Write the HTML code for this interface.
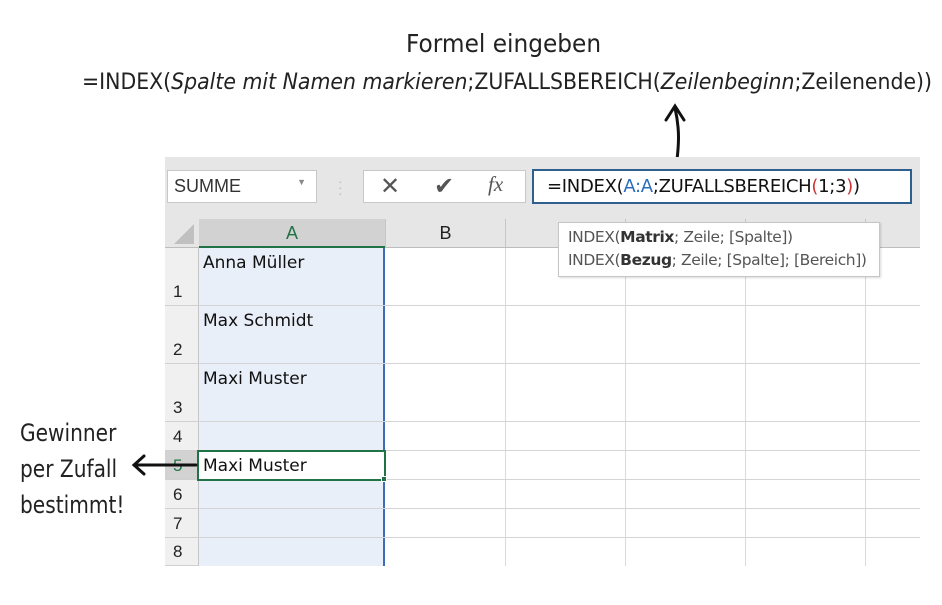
<!DOCTYPE html>
<html><head><meta charset="utf-8"><style>
*{margin:0;padding:0;box-sizing:border-box}
body{width:942px;height:605px;background:#fff;position:relative;overflow:hidden;font-family:"Liberation Sans","DejaVu Sans",sans-serif}
.a{position:absolute}
.hand{font-family:"DejaVu Sans",sans-serif;color:#222;white-space:nowrap;transform-origin:0 0}
.cell{position:absolute;font-family:"DejaVu Sans",sans-serif;font-size:17px;color:#111}
.rh{position:absolute;left:165px;width:34px;background:#f0f0f0;border-bottom:1px solid #d0d0d0;border-right:1px solid #c6c6c6;font-size:17px;color:#222;padding-left:8px;display:flex;align-items:flex-end;padding-bottom:3px}
</style></head><body>
<div class="a hand" style="left:406px;top:29px;font-size:25px;transform:scaleX(0.93)">Formel eingeben</div>
<div class="a hand" style="left:82px;top:70px;font-size:22px;transform:scaleX(0.93);font-weight:normal">=INDEX(<span style="font-style:oblique;font-weight:normal">Spalte mit Namen markieren</span>;ZUFALLSBEREICH(<span style="font-style:oblique">Zeilenbeginn</span>;Zeilenende))</div>
<svg class="a" style="left:660px;top:100px" width="30" height="70"><path d="M16 68 C19 45 20 30 15 8 M6 20 L15 6 L24 20" stroke="#111" stroke-width="3" fill="none" stroke-linecap="round"/></svg>

<div class="a" style="left:165px;top:157px;width:755px;height:62px;background:#e6e6e6"></div>
<div class="a" style="left:167px;top:170px;width:150px;height:33px;background:#fff;border:1px solid #c8c8c8;font-size:18px;color:#333;padding:5px 0 0 6px">SUMME<span style="position:absolute;right:10px;top:6px;font-size:9px;color:#888">▼</span></div>
<div class="a" style="left:338px;top:178px;color:#bbb;font-size:14px;line-height:6px">·<br>·<br>·</div>
<div class="a" style="left:363px;top:170px;width:163px;height:33px;background:#fff;border:1px solid #c8c8c8"></div>
<div class="a" style="left:380px;top:172px;font-size:24px;color:#555">✕</div>
<div class="a" style="left:434px;top:172px;font-size:24px;color:#555">✔</div>
<div class="a" style="left:488px;top:172px;font-size:21px;color:#555;font-family:'Liberation Serif',serif;font-style:italic">fx</div>
<div class="a" style="left:532px;top:169px;width:380px;height:35px;background:#fff;border:2px solid #2f5f8f;font-size:18px;color:#111;padding:5px 0 0 13px;font-family:'DejaVu Sans',sans-serif;letter-spacing:-0.3px">=INDEX(<span style="color:#2a6ebb">A:A</span>;ZUFALLSBEREICH<span style="color:#c33">(</span>1;3<span style="color:#c33">)</span>)</div>

<div class="a" style="left:165px;top:219px;width:755px;height:29px;background:#e6e6e6;border-bottom:1px solid #bdbdbd"></div>
<svg class="a" style="left:170px;top:222px" width="26" height="24"><path d="M24 2 L24 22 L4 22 Z" fill="#c0c0c0"/></svg>
<div class="a" style="left:199px;top:219px;width:186px;height:29px;background:#d2d2d2;border-bottom:2px solid #217346;color:#217346;font-size:18px;text-align:center;padding-top:4px">A</div>
<div class="a" style="left:385px;top:219px;width:120px;height:28px;border-left:1px solid #c6c6c6;font-size:18px;text-align:center;padding-top:4px;color:#222">B</div>
<div class="a" style="left:505px;top:219px;height:28px;border-left:1px solid #c6c6c6"></div>
<div class="a" style="left:625px;top:219px;height:28px;border-left:1px solid #c6c6c6"></div>
<div class="a" style="left:745px;top:219px;height:28px;border-left:1px solid #c6c6c6"></div>
<div class="a" style="left:865px;top:219px;height:28px;border-left:1px solid #c6c6c6"></div>

<div class="a" style="left:199px;top:248px;width:186px;height:318px;background:#e9eff9;border-right:2px solid #3f6cb8"></div>
<div class="a" style="left:505px;top:248px;height:318px;border-left:1px solid #dadada"></div>
<div class="a" style="left:625px;top:248px;height:318px;border-left:1px solid #dadada"></div>
<div class="a" style="left:745px;top:248px;height:318px;border-left:1px solid #dadada"></div>
<div class="a" style="left:865px;top:248px;height:318px;border-left:1px solid #dadada"></div>
<div class="a" style="left:199px;top:305px;width:721px;border-top:1px solid #d4d4d4"></div>
<div class="a" style="left:199px;top:363px;width:721px;border-top:1px solid #d4d4d4"></div>
<div class="a" style="left:199px;top:421px;width:721px;border-top:1px solid #d4d4d4"></div>
<div class="a" style="left:199px;top:450px;width:721px;border-top:1px solid #d4d4d4"></div>
<div class="a" style="left:199px;top:479px;width:721px;border-top:1px solid #d4d4d4"></div>
<div class="a" style="left:199px;top:508px;width:721px;border-top:1px solid #d4d4d4"></div>
<div class="a" style="left:199px;top:537px;width:721px;border-top:1px solid #d4d4d4"></div>

<div class="rh" style="top:248px;height:58px">1</div>
<div class="rh" style="top:306px;height:58px">2</div>
<div class="rh" style="top:364px;height:58px">3</div>
<div class="rh" style="top:422px;height:29px">4</div>
<div class="rh" style="top:451px;height:29px;background:#d2d2d2;color:#217346">5</div>
<div class="rh" style="top:480px;height:29px">6</div>
<div class="rh" style="top:509px;height:29px">7</div>
<div class="rh" style="top:538px;height:28px">8</div>

<div class="cell" style="left:203px;top:253px">Anna Müller</div>
<div class="cell" style="left:203px;top:311px">Max Schmidt</div>
<div class="cell" style="left:203px;top:369px">Maxi Muster</div>
<div class="a" style="left:197px;top:450px;width:189px;height:31px;background:#fff;border:2px solid #217346"></div>
<div class="a" style="left:381px;top:476px;width:6px;height:6px;background:#217346;border:1px solid #fff"></div>
<div class="cell" style="left:203px;top:456px">Maxi Muster</div>

<div class="a" style="left:558px;top:222px;width:322px;height:55px;background:#fff;border:1px solid #c6c6c6;box-shadow:1px 1px 2px rgba(0,0,0,.15);font-size:15.5px;color:#555;padding:3px 0 0 9px;line-height:23px;font-family:'DejaVu Sans',sans-serif;letter-spacing:-0.4px">INDEX(<b style="color:#333">Matrix</b>; Zeile; [Spalte])<br>INDEX(<b style="color:#333">Bezug</b>; Zeile; [Spalte]; [Bereich])</div>

<div class="a hand" style="left:20px;top:415px;font-size:24px;transform:scaleX(0.84);line-height:36px">Gewinner<br>per Zufall<br>bestimmt!</div>
<svg class="a" style="left:130px;top:450px" width="70" height="30"><path d="M4 15 L66 15 M14 6 L4 15 L14 24" stroke="#111" stroke-width="3" fill="none" stroke-linecap="round"/></svg>
</body></html>
